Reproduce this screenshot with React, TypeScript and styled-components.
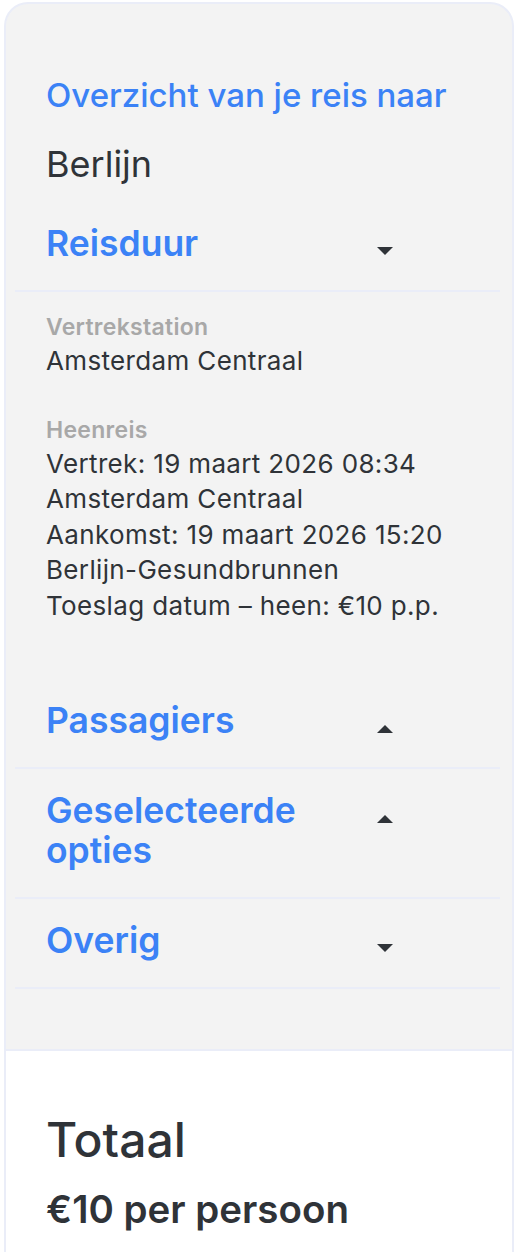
import React from 'react';
import styled, { createGlobalStyle } from 'styled-components';

const GlobalStyle = createGlobalStyle`
  body {
    margin: 0;
    background: #ffffff;
    font-family: Inter, "Noto Sans", sans-serif;
    color: #2f3338;
  }
`;

const Page = styled.div`
  padding: 2px 12px 0 4px;
`;

const Card = styled.div`
  border: 2px solid #eaedf8;
  border-bottom: none;
  border-radius: 24px 24px 0 0;
  overflow: hidden;
  background: #f3f3f3;
`;

const Summary = styled.div`
  padding: 70px 0 60px;
`;

const Intro = styled.div`
  padding: 0 40px 16px;
`;

const Eyebrow = styled.h2`
  margin: 0;
  font-size: 33px;
  line-height: 42px;
  font-weight: 500;
  color: #3b82f6;
`;

const Destination = styled.div`
  margin-top: 26px;
  font-size: 36px;
  line-height: 44px;
  font-weight: 400;
  color: #2f3338;
`;

const Section = styled.div``;

const Header = styled.div<{ $divider?: boolean }>`
  display: flex;
  align-items: flex-start;
  margin: 0 12px 0 9px;
  padding: 22px 0 26px 31px;
  border-bottom: ${(p) => (p.$divider ? '2px solid #eaedf8' : 'none')};
`;

const Title = styled.h3`
  margin: 0;
  flex: 0 0 326px;
  font-size: 35.5px;
  line-height: 40px;
  font-weight: 600;
  color: #3b82f6;
`;

const Caret = styled.span<{ $up?: boolean }>`
  width: 0;
  height: 0;
  margin-top: ${(p) => (p.$up ? '24px' : '23px')};
  margin-left: 5px;
  border-left: 8px solid transparent;
  border-right: 8px solid transparent;
  ${(p) =>
    p.$up ? 'border-bottom: 8px solid #2f3338;' : 'border-top: 8px solid #2f3338;'}
`;

const Details = styled.div`
  padding: 19px 40px 56px;
`;

const Group = styled.div`
  & + & {
    margin-top: 35px;
  }
`;

const Label = styled.div`
  font-size: 23px;
  line-height: 32px;
  font-weight: 600;
  letter-spacing: 0.3px;
  color: #a8a8a8;
`;

const Value = styled.div`
  font-size: 26px;
  line-height: 35.5px;
  letter-spacing: 0.35px;
  color: #2f3338;
`;

const Total = styled.div`
  background: #ffffff;
  border-top: 2px solid #eaedf8;
  padding: 61px 40px 40px;
`;

const TotalLabel = styled.div`
  font-size: 48px;
  line-height: 56px;
  font-weight: 500;
  color: #2f3338;
`;

const TotalValue = styled.div`
  margin-top: 19px;
  font-size: 38.5px;
  line-height: 44px;
  font-weight: 600;
  color: #2f3338;
`;

function App() {
  return (
    <Page>
      <GlobalStyle />
      <Card>
        <Summary>
          <Intro>
            <Eyebrow>Overzicht van je reis naar</Eyebrow>
            <Destination>Berlijn</Destination>
          </Intro>

          <Section>
            <Header $divider>
              <Title>Reisduur</Title>
              <Caret />
            </Header>
            <Details>
              <Group>
                <Label>Vertrekstation</Label>
                <Value>Amsterdam Centraal</Value>
              </Group>
              <Group>
                <Label>Heenreis</Label>
                <Value>Vertrek: 19 maart 2026 08:34</Value>
                <Value>Amsterdam Centraal</Value>
                <Value>Aankomst: 19 maart 2026 15:20</Value>
                <Value>Berlijn-Gesundbrunnen</Value>
                <Value>Toeslag datum – heen: €10 p.p.</Value>
              </Group>
            </Details>
          </Section>

          <Section>
            <Header $divider>
              <Title>Passagiers</Title>
              <Caret $up />
            </Header>
          </Section>
          <Section>
            <Header $divider>
              <Title>Geselecteerde opties</Title>
              <Caret $up />
            </Header>
          </Section>
          <Section>
            <Header $divider>
              <Title>Overig</Title>
              <Caret />
            </Header>
          </Section>
        </Summary>

        <Total>
          <TotalLabel>Totaal</TotalLabel>
          <TotalValue>€10 per persoon</TotalValue>
        </Total>
      </Card>
    </Page>
  );
}

export default App;
